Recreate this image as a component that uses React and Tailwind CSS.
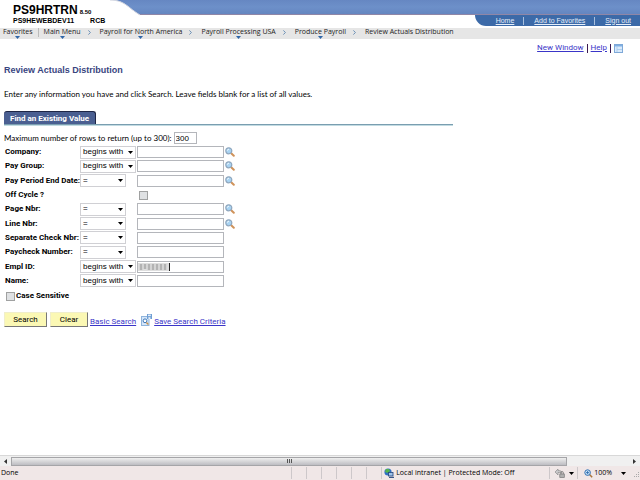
import React from 'react';

const crumbs = [
    { label: 'Payroll for North America', menu: true },
    { label: 'Payroll Processing USA', menu: true },
    { label: 'Produce Payroll', menu: true },
    { label: 'Review Actuals Distribution', menu: false },
];

const fields = [
    { id: 'company', label: 'Company:', op: 'begins with', lookup: true },
    { id: 'paygroup', label: 'Pay Group:', op: 'begins with', lookup: true },
    { id: 'payend', label: 'Pay Period End Date:', op: '=', lookup: true },
    { id: 'offcycle', label: 'Off Cycle ?', checkbox: true },
    { id: 'page', label: 'Page Nbr:', op: '=', lookup: true },
    { id: 'line', label: 'Line Nbr:', op: '=', lookup: true },
    { id: 'sepchk', label: 'Separate Check Nbr:', op: '=' },
    { id: 'paycheck', label: 'Paycheck Number:', op: '=' },
    { id: 'emplid', label: 'Empl ID:', op: 'begins with', masked: true },
    { id: 'name', label: 'Name:', op: 'begins with' },
];

function Caret({ className = '' }) {
    return (
        <svg viewBox="0 0 5 3" className={`h-[3px] w-[5px] shrink-0 ${className}`} aria-hidden="true">
            <path d="M0 0h5L2.5 3z" fill="currentColor" />
        </svg>
    );
}

function LookupIcon() {
    return (
        <svg viewBox="0 0 10 10" className="h-[10px] w-[10px]" aria-hidden="true">
            <path d="M6.2 6.2l2.6 2.6" stroke="#d0935a" strokeWidth="2" strokeLinecap="round" />
            <circle cx="3.8" cy="3.8" r="3" fill="#a9d4f3" stroke="#8fa6bd" strokeWidth="1.2" />
            <path d="M2.4 3.6a1.6 1.6 0 0 1 1.5-1.4" stroke="#fff" strokeWidth=".9" fill="none" />
        </svg>
    );
}

function SaveSearchIcon() {
    return (
        <svg viewBox="0 0 11 12" className="h-3 w-[11px]" aria-hidden="true">
            <rect x=".5" y="2.5" width="7.5" height="9" fill="#d5e7fa" stroke="#8fb4dc" />
            <rect x="6" y="0" width="5" height="5" fill="#6f9fd4" />
            <rect x="7" y=".6" width="2.8" height="1.5" fill="#e8f1fa" />
            <rect x="7.4" y="3.2" width="2" height="1.8" fill="#e8f1fa" />
            <circle cx="4" cy="6.8" r="1.9" fill="#fff" stroke="#3f78b8" />
            <path d="M5.4 8.4l2 2" stroke="#c89048" strokeWidth="1.4" />
        </svg>
    );
}

function GridIcon() {
    return (
        <svg viewBox="0 0 9 9" className="h-[9px] w-[9px]" aria-hidden="true">
            <rect x=".5" y=".5" width="8" height="8" fill="#d9eafb" stroke="#7fa9d8" />
            <path d="M1 1h7v1.5H1z" fill="#7fb0e4" />
            <path d="M3 2.5V8M3 5.5h5" stroke="#a5c8ec" strokeWidth=".8" />
        </svg>
    );
}

function Header() {
    return (
        <header className="grid grid-cols-[minmax(0,1fr)] bg-white [&>*]:col-start-1 [&>*]:row-start-1">
            <div className="h-[15px] border-b border-[#8f86a6] bg-linear-to-b from-[#6687c2] via-[#6d90c9] to-[#6486c0]" />
            <svg viewBox="0 0 142 27" className="h-[27px] w-[142px]" aria-hidden="true">
                <path d="M0 0H110C125 0 128 8 140 15V27H0z" fill="#fff" />
                <path d="M110 0C125 0 128 8 140 15" fill="none" stroke="#d3d6e0" strokeWidth="1" />
            </svg>
            <div className="flex items-start justify-between font-['Liberation_Sans',sans-serif]">
                <div className="text-black">
                    <div className="flex items-baseline pt-[3px] pl-[13px] font-bold">
                        <span className="text-[12px] leading-[14px]">PS9HRTRN</span>
                        <span className="pl-[2px] text-[6px]">8.50</span>
                    </div>
                    <div className="flex gap-4 pl-[13px] text-[7px] leading-[8px] font-bold">
                        <span>PS9HEWEBDEV11</span>
                        <span>RCB</span>
                    </div>
                </div>
                <nav className="mt-[15px] flex h-[11px] items-center rounded-bl-[12px] bg-[#3c6aa8] pl-[21px] text-[7px] leading-[10px] text-[#e6effa]">
                    <a href="#home" className="underline">Home</a>
                    <span className="mr-[10px] ml-[9px] h-[8px] w-px bg-[#a9c0de]" />
                    <a href="#favorites" className="underline">Add to Favorites</a>
                    <span className="mr-[10px] ml-[9px] h-[8px] w-px bg-[#a9c0de]" />
                    <a href="#signout" className="mr-[9px] underline">Sign out</a>
                </nav>
            </div>
        </header>
    );
}

function Breadcrumb() {
    return (
        <nav className="mt-px flex h-[11px] bg-[#e6e6e6] pl-[3px] font-['Open_Sans',sans-serif] text-[7px] leading-[8px] text-[#222]">
            <Crumb label="Favorites" menu />
            <span className="mx-[5px] h-[9px] w-px bg-[#bbb]" />
            <Crumb label="Main Menu" menu />
            {crumbs.map((c) => (
                <React.Fragment key={c.label}>
                    <svg viewBox="0 0 3 5" className="mt-[2px] mr-[9px] ml-[7px] h-[5px] w-[3px]" aria-hidden="true">
                        <path d="M.4.4l2 2.1-2 2.1" fill="none" stroke="#5d86b0" strokeWidth=".9" />
                    </svg>
                    <Crumb {...c} />
                </React.Fragment>
            ))}
        </nav>
    );
}

function Crumb({ label, menu }) {
    return (
        <span className="flex flex-col items-center">
            <a href="#menu">{label}</a>
            {menu && <Caret className="text-[#2f66a8]" />}
        </span>
    );
}

function FieldRow({ field }) {
    return (
        <tr className="h-[14px]">
            <th scope="row" className="p-0 text-left text-[8px] whitespace-nowrap">
                <label htmlFor={field.id}>{field.label}</label>
            </th>
            <td className="p-0">{field.op && <Operator field={field} />}</td>
            <td className="p-0">
                {field.checkbox ? (
                    <div className="pl-[2px]"><Tick id={field.id} /></div>
                ) : (
                    <div className="flex items-center gap-px">
                        <div className="grid [&>*]:col-start-1 [&>*]:row-start-1">
                            <input
                                id={field.id}
                                type="text"
                                className="h-3 w-[87px] border border-[#b4b6bb] bg-white px-[3px]"
                            />
                            {field.masked && <Mask />}
                        </div>
                        {field.lookup && (
                            <button type="button" aria-label={`Look up ${field.label}`}>
                                <LookupIcon />
                            </button>
                        )}
                    </div>
                )}
            </td>
        </tr>
    );
}

function Operator({ field }) {
    const width = field.op === '=' ? 'w-[46px]' : 'w-[56px]';
    return (
        <div className={`grid items-center ${width} [&>*]:col-start-1 [&>*]:row-start-1`}>
            <select
                aria-label={`${field.label} operator`}
                defaultValue={field.op}
                className="h-[13px] w-full appearance-none border border-[#d0d0d4] bg-white pl-[2px] font-['Liberation_Sans',sans-serif]"
            >
                <option>begins with</option>
                <option>=</option>
            </select>
            <Caret className="pointer-events-none mr-[3px] justify-self-end text-black" />
        </div>
    );
}

// Blurred-out employee number
function Mask() {
    return (
        <svg viewBox="0 0 33 10" className="pointer-events-none mt-px ml-px h-[10px] w-[33px]" aria-hidden="true">
            <rect x="0" y="1" width="31" height="8" fill="#dedede" />
            <path d="M3 2v6M7 2v5M11 2v6M15 2v6M19 2v6M23 2v6M27 2v6" stroke="#a2a2a2" strokeWidth="2.4" opacity=".7" />
            <path d="M31.5 1v8" stroke="#222" strokeWidth="1" />
        </svg>
    );
}

function Tick({ id }) {
    return (
        <input
            id={id}
            type="checkbox"
            className="block h-[9px] w-[9px] appearance-none border border-[#a0a1a1] bg-[#dfe1e3] checked:bg-[#4a5f91]"
        />
    );
}

function SearchForm() {
    return (
        <form className="text-[8px] leading-[10px]">
            <div className="mt-[7px] flex items-center gap-[2px] font-['Lato',sans-serif]">
                <label htmlFor="maxrows">Maximum number of rows to return (up to 300):</label>
                <input
                    id="maxrows"
                    type="text"
                    defaultValue="300"
                    className="h-3 w-[23px] border border-[#b4b6bb] bg-white px-px font-['Liberation_Sans',sans-serif]"
                />
            </div>
            <table className="mt-px ml-px h-[143px] border-collapse">
                <colgroup>
                    <col className="w-[74px]" />
                    <col className="w-[57px]" />
                    <col />
                </colgroup>
                <tbody>
                    {fields.map((f) => (
                        <FieldRow key={f.id} field={f} />
                    ))}
                </tbody>
            </table>
            <div className="mt-[3px] ml-[2px] flex items-center gap-px font-bold">
                <Tick id="case" />
                <label htmlFor="case">Case Sensitive</label>
            </div>
            <div className="mt-[11px] flex items-center">
                <button type="button" className="h-[15px] w-[43px] border border-[#f0eecb] border-r-[#777] border-b-[#777] bg-[#fbf8b4]">
                    Search
                </button>
                <button type="button" className="ml-[3px] h-[15px] w-[38px] border border-[#f0eecb] border-r-[#777] border-b-[#777] bg-[#fbf8b4]">
                    Clear
                </button>
                <a href="#basic" className="ml-[2px] pt-1 text-[#3a35c8] underline">Basic Search</a>
                <span className="mr-[2px] ml-[5px]"><SaveSearchIcon /></span>
                <a href="#save" className="pt-1 text-[#3a35c8] underline">Save Search Criteria</a>
            </div>
        </form>
    );
}

function HorizontalScroll() {
    return (
        <div className="flex h-[11px] items-center border-t border-[#d8d8d8] bg-[#f0f0f0]">
            <svg viewBox="0 0 3 5" className="mx-1 h-[5px] w-[3px]" aria-hidden="true">
                <path d="M3 0v5L0 2.5z" fill="#333" />
            </svg>
            <div className="flex flex-1">
                <div className="flex h-[9px] w-[90%] items-center justify-center gap-px border border-[#a5a5a8] bg-linear-to-b from-[#efefef] to-[#bdbdc2]">
                    <span className="h-1 w-px bg-[#555]" />
                    <span className="h-1 w-px bg-[#555]" />
                    <span className="h-1 w-px bg-[#555]" />
                </div>
            </div>
            <svg viewBox="0 0 3 5" className="mx-1 h-[5px] w-[3px]" aria-hidden="true">
                <path d="M0 0v5L3 2.5z" fill="#333" />
            </svg>
        </div>
    );
}

function StatusBar() {
    return (
        <footer className="flex h-[14px] items-center bg-[#f0e7e7] pl-px font-['Open_Sans',sans-serif] text-[7px] leading-[10px] text-black">
            <span className="flex-1">Done</span>
            {[0, 1, 2, 3, 4, 5].map((n) => (
                <span key={n} className="h-3 w-[15px] border-l border-[#cdc8ca]" />
            ))}
            <div className="flex h-3 w-[168px] items-center gap-[2px] border-l border-[#cdc8ca] pl-[2px]">
                <svg viewBox="0 0 10 10" className="h-[10px] w-[10px]" aria-hidden="true">
                    <circle cx="4" cy="4" r="3.6" fill="#2f6fc4" />
                    <path d="M2 1h3l1 2-2 2-3-1z" fill="#52b34c" />
                    <rect x="4.5" y="4.5" width="4.5" height="3.5" fill="#9fc4ea" stroke="#23457c" strokeWidth=".8" />
                    <path d="M5 9.4h5" stroke="#23457c" />
                </svg>
                <span>Local intranet | Protected Mode: Off</span>
            </div>
            <div className="flex h-3 w-[28px] items-center justify-between border-l border-[#cdc8ca] pr-[3px] pl-[5px]">
                <svg viewBox="0 0 10 10" className="h-[10px] w-[10px]" aria-hidden="true">
                    <path d="M0 4l3-3v1.5c3 0 4 1 4 3C6 4.5 5 4.5 3 4.5V7z" fill="#c9c9cb" stroke="#8d8d8d" strokeWidth=".7" />
                    <rect x="4.8" y="6" width="4.5" height="3.5" fill="#b0b0b0" stroke="#777" strokeWidth=".7" />
                    <path d="M5.8 6V4.8a1.3 1.3 0 0 1 2.6 0V6" fill="none" stroke="#777" strokeWidth=".8" />
                </svg>
                <Caret />
            </div>
            <div className="flex h-3 items-center gap-px border-l border-[#cdc8ca] pl-[6px]">
                <svg viewBox="0 0 9 9" className="h-[9px] w-[9px]" aria-hidden="true">
                    <path d="M5.5 5.5l2.7 2.7" stroke="#a9743c" strokeWidth="1.5" />
                    <circle cx="3.6" cy="3.6" r="2.8" fill="#cfe6fa" stroke="#2f6fb0" />
                    <path d="M3.6 2v3.2M2 3.6h3.2" stroke="#2f6fb0" strokeWidth=".9" />
                </svg>
                <span>100%</span>
                <Caret className="ml-[8px]" />
            </div>
            <svg viewBox="0 0 6 6" className="mt-1 ml-[8px] h-[6px] w-[6px]" aria-hidden="true">
                <path d="M4 0h1v1H4zM2 2h1v1H2zM4 2h1v1H4zM0 4h1v1H0zM2 4h1v1H2zM4 4h1v1H4z" fill="#aaa" />
            </svg>
        </footer>
    );
}

export default function App() {
    return (
        <div className="flex min-h-screen flex-col bg-white font-['Roboto',sans-serif] text-black">
            <Header />
            <Breadcrumb />
            <div className="mt-1 flex items-center justify-end gap-[3px] pr-[17px] text-[8px] leading-[10px]">
                <a href="#new" className="text-[#3a35c8] underline">New Window</a>
                <span className="h-[9px] w-px bg-[#3a1a50]" />
                <a href="#help" className="text-[#3a35c8] underline">Help</a>
                <span className="h-[9px] w-px bg-[#3a1a50]" />
                <button type="button" aria-label="Customize page"><GridIcon /></button>
            </div>
            <main className="flex-1 px-1">
                <h1 className="mt-3 font-['Liberation_Sans',sans-serif] text-[9px] leading-[11px] font-bold text-[#39457f]">
                    Review Actuals Distribution
                </h1>
                <p className="mt-[13px] font-['Lato',sans-serif] text-[8px] leading-[10px]">
                    Enter any information you have and click Search. Leave fields blank for a list of all values.
                </p>
                <div className="mt-3 flex w-[71%] border-b border-[#7a9eb0] shadow-[0_1px_0_#c2dbe2]">
                    <h2 className="h-[13px] w-[92px] rounded-t-[3px] border-t border-r border-[#1e2646] bg-[#4a5f91] pl-[6px] text-[8px] leading-[13px] font-bold whitespace-nowrap text-white">
                        Find an Existing Value
                    </h2>
                </div>
                <SearchForm />
            </main>
            <HorizontalScroll />
            <StatusBar />
        </div>
    );
}
